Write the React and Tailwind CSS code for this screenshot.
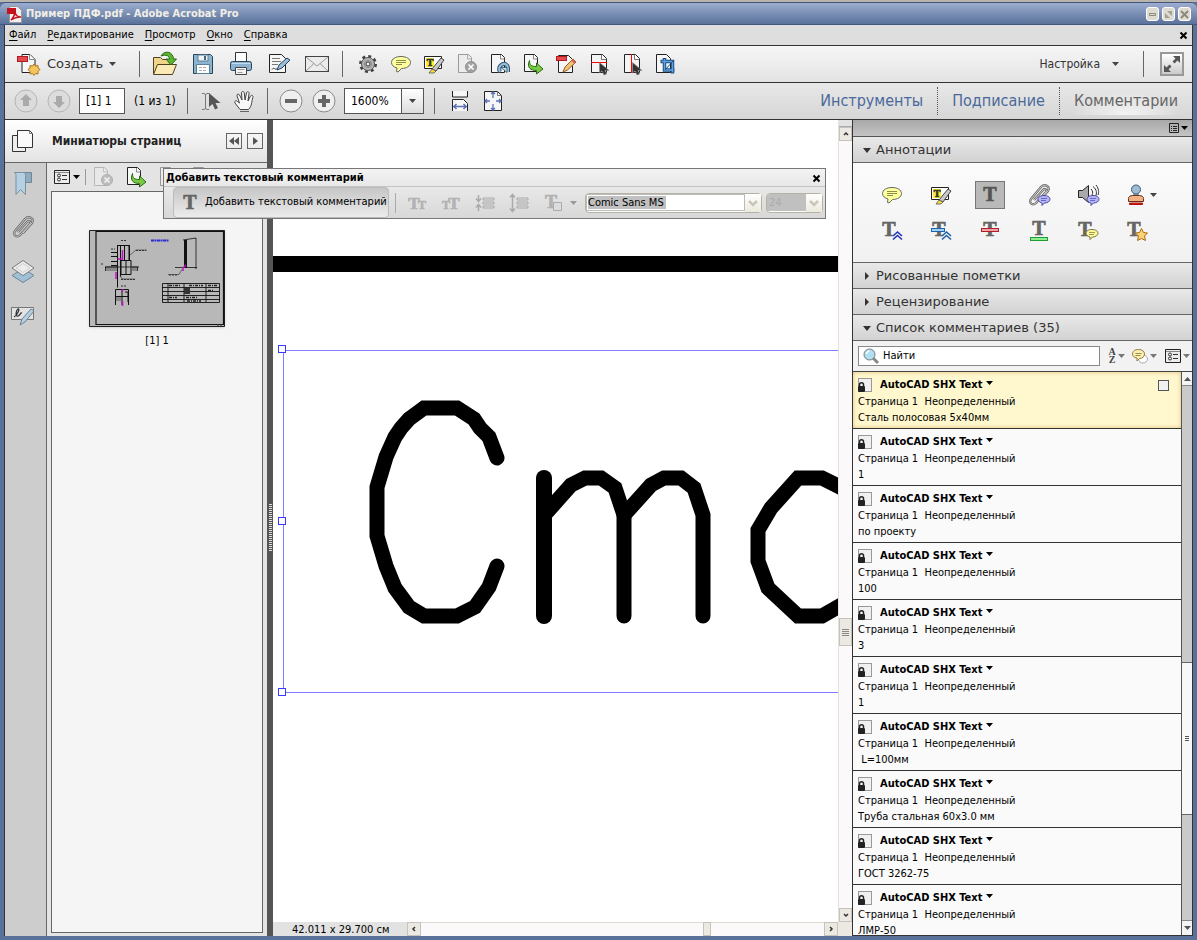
import { useState } from "react";

const COMMENTS = [
  "Сталь полосовая 5x40мм",
  "1",
  "по проекту",
  "100",
  "3",
  "1",
  "\u00a0L=100мм",
  "Труба стальная 60x3.0 мм",
  "ГОСТ 3262-75",
  "ЛМР-50",
];

const MENU = ["Файл", "Редактирование", "Просмотр", "Окно", "Справка"];

/* ── Icons ──────────────────────────────────── */

function Svg({ size = 24, children, className = "" }) {
  return (
    <svg
      width={size}
      height={size}
      viewBox={`0 0 ${size} ${size}`}
      fill="none"
      className={`shrink-0 overflow-visible ${className}`}
      aria-hidden="true"
    >
      {children}
    </svg>
  );
}

function Caret({ className = "text-[#444]" }) {
  return (
    <svg width="7" height="4" viewBox="0 0 7 4" className={`shrink-0 ${className}`} aria-hidden="true">
      <path d="M0 0h7L3.5 4z" fill="currentColor" />
    </svg>
  );
}

function PageShape({ stroke = "#222", fill = "#f4f4f4" }) {
  return (
    <g stroke={stroke}>
      <path d="M4.5 2.500h11l4 4v14h-15z" fill={fill} />
      <path d="M14.500 2.500v5h5" fill="#fff" strokeOpacity=".6" />
    </g>
  );
}

function BigT({ x = 12, y = 18, size = 20, fill = "#666" }) {
  return (
    <text
      x={x}
      y={y}
      fontSize={size}
      textAnchor="middle"
      fill={fill}
      stroke={fill}
      strokeWidth=".7"
      className="font-['Liberation_Serif',serif] font-bold"
    >
      T
    </text>
  );
}

function Pointer() {
  return <path d="M12.500 10.500v10.500l2.500-2 2 4 2.500-1-1.500-3.500h4z" fill="#333" stroke="#888" strokeWidth=".6" />;
}

function AcrobatIcon() {
  return (
    <Svg size={17}>
      <path d="M3.500.5h8l4 4v12h-12z" fill="#f4eeee" stroke="#999" />
      <path d="M1 2h9v6H1z" fill="#c4131c" />
      <path d="M5 14c3-3 4-6 4-9 0 4 2 6 6 6-4-.5-7 1-10 3z" stroke="#c4131c" strokeWidth="1.500" />
    </Svg>
  );
}

function CreateIcon() {
  return (
    <Svg size={24}>
      <path d="M5 2.500h8l5 5v13H5z" fill="#f7f7f7" stroke="#222" />
      <path d="M12.500 2.500v5h5" fill="#fff" stroke="#888" />
      <rect x=".5" y="4.500" width="10" height="5" fill="#e34a50" stroke="#b3191f" />
      <path
        d="M17 12l1.500 2 2.500-.5V16l2 1.500-2 2V22l-2.500-.5-1.500 2-1.500-2-2.500.5v-2.500l-2-2 2-1.500v-2.500l2.500.5z"
        fill="#f6c45c"
        stroke="#a8741a"
      />
    </Svg>
  );
}

function OpenIcon() {
  return (
    <Svg size={26}>
      <path d="M1.500 22.500v-16h7l2 2h9v14z" fill="#f0d48a" stroke="#4f4020" />
      <path d="M1.500 23.500l4-10h19l-4 10z" fill="#fbeab5" stroke="#4f4020" />
      <path d="M9 5c3-6 12-5 12.500 3h3L19 14l-5-6h3.500c0-3-3-5-8.500-3z" fill="#5cb531" stroke="#2b6b12" />
    </Svg>
  );
}

function SaveIcon() {
  return (
    <Svg size={24}>
      <path d="M2.500 2.500h17l2 2v17h-19z" fill="#8db4cf" stroke="#27455d" />
      <path d="M7 3h10v6H7z" fill="#eef3f6" stroke="#5a7f99" />
      <rect x="13" y="4" width="2" height="4" fill="#44647c" />
      <path d="M5.500 12.500h13v9h-13z" fill="#fff" stroke="#5a7f99" />
      <path d="M8 15.500h8M8 18.500h8" stroke="#aaa" strokeDasharray="3 1" />
    </Svg>
  );
}

function PrintIcon() {
  return (
    <Svg size={24}>
      <path d="M6.500.5h11v9h-11z" fill="#fff" stroke="#333" />
      <rect x="1.500" y="9.500" width="21" height="9" rx="2" fill="#8db3d0" stroke="#27455d" />
      <path d="M3 11.500h18" stroke="#c7dcea" />
      <path d="M6.500 15.500h11v7h-11z" fill="#f5f5f5" stroke="#444" />
      <path d="M8.500 17.500h7M8.500 20.500h5" stroke="#999" />
    </Svg>
  );
}

function SignIcon() {
  return (
    <Svg size={24}>
      <path d="M2.500 2.500h12l4 4v14h-16z" fill="#f6f6f6" stroke="#222" />
      <path d="M5 6.500h8M5 9.500h9M5 12.500h6" stroke="#777" />
      <path d="M5 17.500c2-3 3 1 5-1" stroke="#333" />
      <path d="M10 18l2-5 8-7 3 2-8 8z" fill="#9dbdd8" stroke="#26435e" />
    </Svg>
  );
}

function MailIcon() {
  return (
    <Svg size={26}>
      <rect x="1.500" y="5.500" width="23" height="15" fill="#ebebeb" stroke="#444" />
      <path d="M2 6l11 9 11-9M2 20l8-7.500M24 20l-8-7.500" stroke="#999" />
    </Svg>
  );
}

function GearIcon() {
  return (
    <Svg>
      <circle cx="12" cy="12" r="7.500" stroke="#444" strokeWidth="3" strokeDasharray="2.945 2.945" />
      <circle cx="12" cy="12" r="6.500" fill="#b4b4b4" stroke="#555" />
      <circle cx="12" cy="12" r="3.500" stroke="#888" />
      <circle cx="12" cy="12" r="2" fill="#eee" stroke="#444" />
    </Svg>
  );
}

function BubbleIcon() {
  return (
    <Svg>
      <path
        d="M12 4.500c5.500 0 9.500 2.500 9.500 6s-4 6-9 6l-3.500 3.500-1.500-.5.500-3.500c-3.500-1-5.500-3-5.500-5.500 0-3.500 4-6 9.500-6z"
        fill="#feff9d"
        stroke="#666"
      />
      <path d="M7 8.500h10M7 10.500h10M7 12.500h6" stroke="#8c8c4c" />
    </Svg>
  );
}

function HighlightIcon() {
  return (
    <Svg>
      <path d="M2.500 4.500h17v12h-17z" fill="#fff" stroke="#222" />
      <rect x="4" y="6" width="8" height="9" fill="#ffee2e" />
      <BigT x={8} y={14} size={10} fill="#333" />
      <path d="M10 17l9-11 3 2-8 11z" fill="#c9c9c9" stroke="#444" />
      <path d="M7 21l3-4 4 2-2 2z" fill="#f6dc3a" stroke="#555" strokeWidth=".8" />
    </Svg>
  );
}

function DeletePageIcon() {
  return (
    <Svg>
      <path d="M3.500 2.500h10l3 3v15h-13z" fill="#ececec" stroke="#9a9a9a" />
      <path d="M12.500 3v4h4" stroke="#aaa" />
      <circle cx="16" cy="15" r="5.500" fill="#a3a3a3" stroke="#8d8d8d" />
      <path d="M13.500 12.500l5 5m0-5l-5 5" stroke="#fff" strokeWidth="1.500" />
    </Svg>
  );
}

function RotatePageIcon() {
  return (
    <Svg>
      <path d="M3.500 2.500h10l3 3v15h-13z" fill="#f6f6f6" stroke="#222" />
      <path d="M12.500 3v4h4" stroke="#888" />
      <path d="M12 20c-4-7 7-12 8-4v4" stroke="#31516b" strokeWidth="4" />
      <path d="M12 20c-4-7 7-12 8-4v4" stroke="#9cc3de" strokeWidth="2" />
      <path d="M13 15.500h6v5z" fill="#b9d8eb" stroke="#31516b" strokeWidth=".8" />
    </Svg>
  );
}

function ExtractPageIcon() {
  return (
    <Svg>
      <path d="M3.500 2.500h10l3 3v14h-13z" fill="#f6f6f6" stroke="#222" />
      <path d="M12.500 3v4h4" stroke="#888" />
      <path d="M8.500 8.500c0 5 2 6 7 6V11l6.500 6-6.500 5v-3.500c-6 0-10-3-7-10z" fill="#78c943" stroke="#2c6a14" />
    </Svg>
  );
}

function EditPdfIcon() {
  return (
    <Svg>
      <path d="M4.500 3.500h10l4 4v13h-14z" fill="#f6f6f6" stroke="#222" />
      <rect x="2.500" y="4.500" width="10" height="4" fill="#e8474c" stroke="#b3191f" />
      <path d="M9 20l2-5 8-8 3 3-8.500 8z" fill="#f3c077" stroke="#96601d" />
      <path d="M18 8l3 3" stroke="#d45d5d" strokeWidth="2" />
    </Svg>
  );
}

function SplitIcon({ vertical }) {
  return (
    <Svg>
      <PageShape />
      {vertical ? <path d="M11.500 2v19" stroke="#f00" /> : <path d="M4 10.500h16" stroke="#f00" />}
      <Pointer />
    </Svg>
  );
}

function CropIcon() {
  return (
    <Svg>
      <path d="M3.500 2.500h10l4 4v14h-14z" fill="#f6f6f6" stroke="#222" />
      <path d="M11.500 6v12h10M7.500 9.500h12v12" stroke="#194e84" strokeWidth="3.500" />
      <path d="M11.500 7v11h9M8.500 9.500h11v11" stroke="#63a3dc" strokeWidth="1.500" />
      <path d="M12 18L21 8" stroke="#194e84" />
    </Svg>
  );
}

function ExpandIcon() {
  return (
    <Svg size={20}>
      <path d="M11 2h7v7l-2.500-2.500-3 3-2-2 3-3zM9 18H2v-7l2.500 2.500 3-3 2 2-3 3z" fill="#555" />
    </Svg>
  );
}

function RoundIcon({ children, dim }) {
  return (
    <Svg>
      <circle cx="12" cy="12" r="11" fill={dim ? "#dcdcdc" : "#efefef"} stroke={dim ? "#b5b5b5" : "#8a8a8a"} />
      {children}
    </Svg>
  );
}

function CursorIcon() {
  return (
    <Svg>
      <path d="M3 4.500h2l1.500 1 1.500-1h2M3 20.500h2l1.500-1 1.500 1h2M6.500 5v15" stroke="#777" />
      <path d="M10 4v14l3.500-3 2.500 5.500 3-1.500-2.500-5h5z" fill="#555" />
    </Svg>
  );
}

function HandIcon() {
  return (
    <Svg>
      <path
        d="M8 20.500L3 14c-1-2 1-3 2.500-1.500L7.500 14 5 7c-.5-2 1.800-2.500 2.500-1L10 11 9.500 4c0-2 2.500-2 2.800 0L13 11l1.500-7c.5-2 2.800-1.500 2.500.5L16 12l2.500-5c1-1.500 3-.5 2.300 1.500C19.500 13 20 17 16.500 20.500z"
        fill="#f7f7f7"
        stroke="#444"
      />
      <path d="M8 22.500h9" stroke="#666" />
    </Svg>
  );
}

function FitWidthIcon() {
  return (
    <Svg>
      <path d="M4.500 2v6h15V2M4.500 22V10.500h11l4 4V22" fill="#f6f6f6" stroke="#222" />
      <path d="M5 17.500h14M8.500 15l-2.500 2.500 2.500 2.500M15.500 15l2.500 2.500-2.500 2.500" stroke="#5a72b5" strokeWidth="1.500" />
    </Svg>
  );
}

function FitPageIcon() {
  return (
    <Svg>
      <path d="M3.500 2.500h13l4 4v15h-17z" fill="#f6f6f6" stroke="#222" />
      <path d="M16.500 2.500v4h4" stroke="#777" />
      <path d="M12 3v6M12 15v6M4 12h5M15 12h5M10 5l2-2 2 2M10 19l2 2 2-2M6 10l-2 2 2 2M18 10l2 2-2 2" stroke="#5a72b5" strokeWidth="1.300" />
    </Svg>
  );
}

function PagesIcon() {
  return (
    <Svg>
      <path d="M1.500 6.500h13v16h-13z" fill="#eee" stroke="#333" />
      <path d="M6.500 1.500h12l3 3v14h-15z" fill="#fafafa" stroke="#333" />
      <path d="M18.500 1.500v3h3" stroke="#777" />
    </Svg>
  );
}

function BookmarkIcon() {
  return (
    <Svg>
      <path d="M3.500 1.500h17v10h-6v-7z" fill="#8fabc0" stroke="#6f8798" />
      <path d="M3.500 1.500h9c2 0 2 2 2 3v19l-5-5-4.500 5V4c0-1-.5-2-1.500-2.500z" fill="#b5d0e2" stroke="#7790a2" />
    </Svg>
  );
}

function ClipIcon({ bubble }) {
  return (
    <Svg>
      <path d="M7 17L16 7c2-2 4.500 0 3 2L9 20c-3 3-8 0-5-4L14 4c4-4 10 0 7 4l-9 10" stroke="#6a6a6a" strokeWidth="2.400" />
      <path d="M7 17L16 7c2-2 4.500 0 3 2L9 20c-3 3-8 0-5-4L14 4c4-4 10 0 7 4l-9 10" stroke="#d5d5d5" strokeWidth=".9" />
      {bubble && <SmallBubble fill="#b5b5ff" stroke="#4a4a9a" />}
    </Svg>
  );
}

function SmallBubble({ fill, stroke }) {
  return (
    <g>
      <path d="M17 12.500c3.500 0 6 1.500 6 3.700s-2.500 3.800-5.500 3.800L15 22.500V20c-2-.5-4-2-4-3.800 0-2.200 2.500-3.700 6-3.700z" fill={fill} stroke={stroke} />
      <path d="M14 15.500h6M14 17.500h5" stroke={stroke} strokeOpacity=".7" />
    </g>
  );
}

function LayersIcon() {
  return (
    <Svg>
      <path d="M12 9.500l11 7-11 7-11-7z" fill="#9fc0d6" stroke="#6f8798" />
      <path d="M12 1.500l11 7.500-11 7.500L1 9z" fill="#ededed" stroke="#7b7b7b" />
      <path d="M12 4.500l7 4.500-7 4.500L5 9z" stroke="#cfcfcf" />
    </Svg>
  );
}

function SignaturesIcon() {
  return (
    <Svg>
      <path d="M.5 4.500h22v12H.5z" fill="#e3e3e3" stroke="#777" />
      <path d="M3 14c4-2 6-9 4-8s-3 8 0 7 2-4 4-3" stroke="#333" strokeWidth="1.300" />
      <path d="M9 22l2-6 9-10 3 2-9 11z" fill="#b5cfe0" stroke="#6c8496" />
    </Svg>
  );
}

function OptionsIcon() {
  return (
    <Svg size={16}>
      <path d="M.5 1.500h15v13H.5z" fill="#ececec" stroke="#222" />
      <path d="M1 3.500h14" stroke="#888" />
      <circle cx="5" cy="6.500" r="1.500" stroke="#333" />
      <circle cx="5" cy="10.500" r="1.500" stroke="#333" />
      <path d="M8 6.500h5M8 10.500h5" stroke="#333" />
    </Svg>
  );
}

function SoundIcon() {
  return (
    <Svg>
      <path d="M2.500 7.500h4l6-5v17l-6-5h-4z" fill="#a9a9a9" stroke="#222" />
      <path d="M15 6c2 2 2 4 1 6M17 3.500c4 3 4 7 2.500 10M20 2c3 4 3 7 2 10" stroke="#333" />
      <SmallBubble fill="#b5b5ff" stroke="#4a4a9a" />
    </Svg>
  );
}

function StampIcon() {
  return (
    <Svg>
      <path d="M9 11l1-4h4l1 4v3H9z" fill="#8aa9bf" />
      <circle cx="12" cy="6.500" r="4.500" fill="#9dbed2" stroke="#3f5a6c" />
      <path d="M4.500 18.500v-3c0-2 2-3 4-3h7c2 0 4 1 4 3v3z" fill="#f4b183" stroke="#5d3217" />
      <path d="M5.500 20h13v1.500h-13z" fill="#f22" stroke="#a11" />
    </Svg>
  );
}

function Chevrons({ stroke }) {
  return (
    <g transform="translate(0 -1)">
      <path d="M13 18l4.500-4 4.500 4M13 21.500l4.500-4 4.500 4" stroke={stroke} strokeWidth="1.600" />
    </g>
  );
}

function TextMarkIcon({ kind }) {
  return (
    <Svg>
      {kind === "insert" && (
        <>
          <BigT x={9} y={17} />
          <Chevrons stroke="#2433b8" />
        </>
      )}
      {kind === "replace" && (
        <>
          <BigT x={10} y={17} />
          <rect x="2.500" y="9.500" width="13" height="3" fill="#9fd0f5" stroke="#1f64a8" />
          <Chevrons stroke="#1f64a8" />
        </>
      )}
      {kind === "strike" && (
        <>
          <BigT y={17} />
          <rect x="3.500" y="9.500" width="17" height="3" fill="#f3a0a5" stroke="#b01e2a" />
        </>
      )}
      {kind === "underline" && (
        <>
          <BigT y={16} />
          <rect x="3.500" y="18.500" width="17" height="3" fill="#8fee8f" stroke="#1d9c33" />
        </>
      )}
      {kind === "note" && (
        <>
          <BigT x={9} y={17} />
          <g transform="translate(-1 -2)">
            <SmallBubble fill="#fdf89a" stroke="#77733a" />
          </g>
        </>
      )}
      {kind === "star" && (
        <>
          <BigT x={9} y={17} />
          <path d="M16.500 9.500l2 4 4 .5-3 3 1 4.500-4-2-4 2 1-4.500-3-3 4-.5z" fill="#fbd270" stroke="#a8691b" />
        </>
      )}
    </Svg>
  );
}

function LockIcon() {
  return (
    <Svg size={14}>
      <rect x=".5" y=".5" width="13" height="13" fill="#f0f0f0" stroke="#999" />
      <rect y="8" width="7" height="6" rx="1" fill="#222" />
      <path d="M1.500 8V6.500c0-2.500 4-2.500 4 0V8" stroke="#222" strokeWidth="1.500" />
    </Svg>
  );
}

function Thumbnail() {
  return (
    <svg width="136" height="97" viewBox="0 0 136 97" fill="none" className="bg-[#b8b8b8] shadow-sm" aria-hidden="true">
      <path d="M.5.500h135v96H.5z" stroke="#222" />
      <path d="M7 1.500h127.500v93H7z" stroke="#111" strokeWidth="1.200" />
      <g stroke="#111">
        <path d="M28 15.500h12v15M28.500 15.500v42M31.500 15.500v31M35.500 15.500v15M32 30.500h10v14H32zM37 31v13M40.500 15v15" />
        <path d="M16.500 41v-4h32v4M16 37h12M43 37h7" strokeWidth=".8" />
        <path d="M22 22.500h6M22 26.500h6M22 31.500h6M22 35.500h6" />
        <path d="M41 25l6-5h11" strokeWidth=".5" />
        <path d="M31 45l2 4h13" strokeWidth=".5" />
        <path d="M26.500 75V59.500h13V75M26 66.500h13M33 60v15M36 62h3v10" />
        <path d="M96.500 10v28" strokeWidth="3" />
        <path d="M94 10l13-2v31M86 37.500h22" strokeWidth=".8" />
        <path d="M79 44.500h11l3-5" strokeWidth=".5" />
        <path d="M73.500 53.500h57v19h-57zM73.500 57.500h57M73.500 61.500h57M73.500 65.500h57M73.500 69.500h57M79 53v19M95 53v19M117 53v19" strokeWidth=".9" />
      </g>
      <path d="M17 38h11v3H17zM43 38h5v3h-5zM27 67h5v4h-5z" fill="#888" />
      <path d="M80 55.500h12M100 55.500h14M119 55.500h9M80 67.500h8M97 67.500h12M119 60.500h6M98 71h14" stroke="#222" strokeWidth="1.500" strokeDasharray="3 1 1 1" />
      <path d="M95 58h6v6h-6z" fill="#333" />
      <path d="M32 10.500h5M32 56h5M47 20.500h10M32 49.500h14M80 45h8M22 19h4M12 34h2M128 95h6" stroke="#333" strokeDasharray="2 1" />
      <path d="M62 10.500h18" stroke="#2a2ad8" strokeWidth="2" strokeDasharray="3 .5 2 .5" />
      <path d="M33.500 20v9h-5M27 42v7M33.500 59v3M33.500 71v5M97 35l-3 3v3" stroke="#c010c0" strokeWidth="1.500" />
    </svg>
  );
}

/* ── Bits shared by the bars ─────────────────── */

function IconButton({ label, children, className = "w-[33px]" }) {
  return (
    <button type="button" aria-label={label} className={`flex h-6 shrink-0 items-center justify-center ${className}`}>
      {children}
    </button>
  );
}

function Separator({ className = "" }) {
  return <span className={`h-[26px] w-px shrink-0 bg-[#666] ${className}`} />;
}

function ScrollButton({ label, d, className = "h-[14px] w-full" }) {
  return (
    <button
      type="button"
      aria-label={label}
      className={`flex shrink-0 items-center justify-center border border-[#c5c3bb] bg-[#ece9e2] ${className}`}
    >
      <svg width="6" height="6" viewBox="0 0 6 6" fill="none" aria-hidden="true">
        <path d={d} stroke="#333" strokeWidth="1.500" />
      </svg>
    </button>
  );
}

function TitleBar() {
  const box = "flex h-[14px] w-[13px] items-center justify-center rounded-[3px] border border-white bg-[#dedcd2]";
  return (
    <header className="flex h-[23px] shrink-0 items-center rounded-t-md border-y border-[#42567b] bg-gradient-to-b from-[#9dadd0] to-[#59729a] pt-px pr-1.5 pl-1.5">
      <AcrobatIcon />
      <h1 className="ml-[3px] flex-1 text-[11px] font-bold text-[#f1efe6]">Пример ПДФ.pdf - Adobe Acrobat Pro</h1>
      <div className="flex gap-[3px]">
        <button type="button" aria-label="Свернуть" className={box}>
          <Svg size={9}>
            <path d="M1.500 3.500h6v2h-6z" stroke="#8c887a" />
          </Svg>
        </button>
        <button type="button" aria-label="Развернуть" className={box}>
          <Svg size={9}>
            <path d="M3 1h5v5zM1 3v5h5z" fill="#a5a192" />
          </Svg>
        </button>
        <button type="button" aria-label="Закрыть" className={box}>
          <Svg size={9}>
            <path d="M1 1l7 7M8 1L1 8" stroke="#8c887a" strokeWidth="2" />
          </Svg>
        </button>
      </div>
    </header>
  );
}

function MenuBar() {
  return (
    <nav className="flex h-[21px] shrink-0 items-center gap-[11px] border-b border-[#333] bg-[#dedede] pr-[5px] pl-1">
      {MENU.map((item) => (
        <button key={item} type="button" className="text-[11px]">
          <span className="underline underline-offset-2">{item[0]}</span>
          {item.slice(1)}
        </button>
      ))}
      <button type="button" aria-label="Закрыть документ" className="ml-auto">
        <Svg size={7}>
          <path d="M.5.500l6 6M6.500.500l-6 6" stroke="#000" strokeWidth="2" />
        </Svg>
      </button>
    </nav>
  );
}

function MainToolbar() {
  const wide = "w-[38px]";
  return (
    <div className="flex h-[37px] shrink-0 items-center border-b border-[#333] bg-gradient-to-b from-[#f6f6f6] to-[#e3e3e3] pr-2 pl-3">
      <button type="button" className="flex w-[102px] items-center font-['DejaVu_Sans',sans-serif] text-[13px] text-[#333]">
        <CreateIcon />
        <span className="ml-1.5">Создать</span>
        <Caret className="ml-1.5 text-[#444]" />
      </button>
      <Separator className="ml-5" />
      <div className="mr-1.5 ml-1.5 flex items-center">
        <IconButton label="Открыть" className={wide}><OpenIcon /></IconButton>
        <IconButton label="Сохранить" className={wide}><SaveIcon /></IconButton>
        <IconButton label="Печать" className={wide}><PrintIcon /></IconButton>
        <IconButton label="Подписать" className={wide}><SignIcon /></IconButton>
        <IconButton label="Отправить" className={wide}><MailIcon /></IconButton>
      </div>
      <Separator />
      <div className="ml-2 flex items-center">
        <IconButton label="Параметры"><GearIcon /></IconButton>
        <IconButton label="Заметка"><BubbleIcon /></IconButton>
        <IconButton label="Выделить текст"><HighlightIcon /></IconButton>
        <IconButton label="Удалить страницу"><DeletePageIcon /></IconButton>
        <IconButton label="Повернуть"><RotatePageIcon /></IconButton>
        <IconButton label="Извлечь"><ExtractPageIcon /></IconButton>
        <IconButton label="Редактировать PDF"><EditPdfIcon /></IconButton>
        <IconButton label="Разделить по горизонтали"><SplitIcon /></IconButton>
        <IconButton label="Разделить по вертикали"><SplitIcon vertical /></IconButton>
        <IconButton label="Обрезать"><CropIcon /></IconButton>
      </div>
      <button type="button" className="mr-6 ml-auto flex items-center gap-3 text-xs text-[#333]">
        Настройка
        <Caret />
      </button>
      <Separator />
      <button
        type="button"
        aria-label="Режим чтения"
        className="ml-4 flex h-6 w-6 items-center justify-center border-2 border-[#999] bg-gradient-to-b from-white to-[#ccc]"
      >
        <ExpandIcon />
      </button>
    </div>
  );
}

function NavToolbar() {
  const [page, setPage] = useState("[1] 1");
  const tab = "px-3.5 text-base leading-7";
  return (
    <div className="flex h-[37px] shrink-0 items-center border-b border-[#333] bg-gradient-to-b from-[#e8e8e8] to-[#d6d6d6] pl-1">
      <IconButton label="Предыдущая страница">
        <RoundIcon dim><path d="M12 5l6 6h-3v6H9v-6H6z" fill="#aaa" /></RoundIcon>
      </IconButton>
      <IconButton label="Следующая страница">
        <RoundIcon dim><path d="M12 19l6-6h-3V7H9v6H6z" fill="#aaa" /></RoundIcon>
      </IconButton>
      <input
        aria-label="Номер страницы"
        value={page}
        onChange={(e) => setPage(e.target.value)}
        className="ml-1 h-[26px] w-[46px] border border-[#555] bg-white px-1.5 text-xs"
      />
      <span className="ml-[9px] w-[53px] text-xs">(1 из 1)</span>
      <Separator />
      <div className="ml-1.5 flex items-center pr-[7px]">
        <IconButton label="Выделение"><CursorIcon /></IconButton>
        <IconButton label="Рука"><HandIcon /></IconButton>
      </div>
      <Separator />
      <div className="ml-1.5 flex items-center">
        <IconButton label="Уменьшить">
          <RoundIcon><path d="M6 10h12v4H6z" fill="#666" /></RoundIcon>
        </IconButton>
        <IconButton label="Увеличить">
          <RoundIcon><path d="M10 6h4v4h4v4h-4v4h-4v-4H6v-4h4z" fill="#666" /></RoundIcon>
        </IconButton>
      </div>
      <div className="ml-1 flex h-[26px] w-20 items-center border border-[#555] bg-white">
        <select aria-label="Масштаб" className="h-full min-w-0 flex-1 appearance-none pl-1.5 text-xs">
          <option>1600%</option>
          <option>100%</option>
        </select>
        <span className="flex h-full w-[22px] items-center justify-center border-l border-[#555] bg-gradient-to-b from-white to-[#ddd]">
          <Caret />
        </span>
      </div>
      <Separator className="ml-2.5" />
      <div className="ml-2 flex items-center">
        <IconButton label="По ширине"><FitWidthIcon /></IconButton>
        <IconButton label="Страница целиком"><FitPageIcon /></IconButton>
      </div>
      <div className="ml-auto flex items-center">
        <button type="button" className={`${tab} border-r border-dotted border-[#555] text-[#49699a]`}>Инструменты</button>
        <button type="button" className={`${tab} border-r border-dotted border-[#555] text-[#49699a]`}>Подписание</button>
        <button type="button" className={`${tab} bg-[radial-gradient(ellipse_at_bottom,#f4f4f4,transparent_60%)] text-[#666]`}>
          Комментарии
        </button>
      </div>
    </div>
  );
}

/* ── Left side ──────────────────────────────── */

function PagesPanel() {
  return (
    <aside className="flex w-[263px] shrink-0 flex-col border-r border-[#555]">
      <div className="flex h-[43px] shrink-0 items-center border-b border-[#666] bg-gradient-to-b from-white to-[#e3e3e3] pr-1 pl-1.5">
        <PagesIcon />
        <h2 className="ml-[17px] flex-1 text-xs font-bold text-[#222]">Миниатюры страниц</h2>
        <div className="flex gap-[5px]">
          <button type="button" aria-label="Свернуть панель" className="flex h-4 w-4 items-center justify-center border border-[#666]">
            <Svg size={10}><path d="M5 1v8L0 5zM10 1v8L5 5z" fill="#555" /></Svg>
          </button>
          <button type="button" aria-label="Развернуть панель" className="flex h-4 w-4 items-center justify-center border border-[#666]">
            <Svg size={10}><path d="M3 1v8l5-4z" fill="#555" /></Svg>
          </button>
        </div>
      </div>
      <div className="flex min-h-0 flex-1">
        <nav className="flex w-[42px] shrink-0 flex-col items-center gap-5 border-r border-[#666] bg-[#cdcdcd] pt-2 pr-[5px]">
          <IconButton label="Закладки"><BookmarkIcon /></IconButton>
          <IconButton label="Вложения"><ClipIcon /></IconButton>
          <IconButton label="Слои"><LayersIcon /></IconButton>
          <IconButton label="Подписи"><SignaturesIcon /></IconButton>
        </nav>
        <div className="flex min-w-0 flex-1 flex-col bg-[#e4e4e4] px-1 pb-[3px]">
          <div className="flex h-7 shrink-0 items-center pl-[3px]">
            <button type="button" aria-label="Параметры" className="flex items-center gap-[3px]">
              <OptionsIcon />
              <Caret className="text-black" />
            </button>
            <span className="ml-[5px] h-4 w-px bg-[#999]" />
            <span className="flex">
              <IconButton label="Удалить"><span className="opacity-60"><DeletePageIcon /></span></IconButton>
              <IconButton label="Извлечь"><ExtractPageIcon /></IconButton>
              <span className="flex opacity-40">
                <IconButton label="Повернуть влево"><RotatePageIcon /></IconButton>
                <IconButton label="Повернуть вправо"><RotatePageIcon /></IconButton>
              </span>
            </span>
          </div>
          <div className="flex flex-1 flex-col items-center border border-[#666] bg-[#f5f5f5] pt-[38px]">
            <Thumbnail />
            <p className="mt-1.5 text-[11px] leading-4">[1] 1</p>
          </div>
        </div>
      </div>
    </aside>
  );
}

function Splitter() {
  return (
    <div className="flex w-[5px] shrink-0 flex-col items-center justify-center bg-[#555]">
      <span className="h-12 w-[3px] bg-[repeating-linear-gradient(#ddd_0_1px,#555_1px_2px)]" />
    </div>
  );
}

/* ── Page canvas ────────────────────────────── */

function Drawing() {
  return (
    <svg width="100%" height="100%" fill="none" className="block" role="img" aria-label="Чертеж">
      <rect y="136" width="100%" height="16" fill="#000" />
      <g transform="translate(-273 -120)">
        <g stroke="#000" strokeWidth="15" strokeLinecap="round" strokeLinejoin="miter">
          <polyline points="497,458 489,437 480,428 474,419 457,408 424,408 409,419 401,428 395,437 386,457 377,487 377,536 386,566 395,588 409,607 424,616 457,616 475,607 489,587 497,566" />
          <polyline points="544,478 544,616" strokeWidth="16" />
          <polyline points="547,512 571,485 585,478 601,478 615,488 624,515 624,616" />
          <polyline points="624,515 651,485 664,478 681,478 694,488 703,515 703,616" />
          <polyline points="850,492 822,478 798,478 771,508 758,530 758,561 768,588 798,616 822,616 850,600" />
        </g>
        <path d="M1400 350.500H283.500v342H1400" stroke="#7f7fff" />
        <g fill="#fff" stroke="#3a3aff">
          <rect x="278.500" y="345.500" width="7" height="7" />
          <rect x="278.500" y="517.500" width="7" height="7" />
          <rect x="278.500" y="688.500" width="7" height="7" />
        </g>
      </g>
    </svg>
  );
}

function DocumentView() {
  return (
    <main className="flex min-w-0 flex-1 flex-col bg-white">
      <div className="flex min-h-0 flex-1">
        <div className="min-w-0 flex-1 overflow-hidden">
          <Drawing />
        </div>
        <div className="flex w-[14px] shrink-0 flex-col border-l border-[#e4e2dc] bg-[#fbf9fa]">
          <span className="h-[7px] shrink-0 border-b border-[#aaa] bg-[#e2e2e2]" />
          <ScrollButton label="Вверх" d="M1 4l2-2 2 2" />
          <span className="flex-[477]" />
          <span className="flex h-7 w-full flex-col items-center justify-center gap-px border border-[#c5c3bb] bg-[#ece9e2]">
            <span className="h-px w-[7px] bg-[#888]" />
            <span className="h-px w-[7px] bg-[#888]" />
            <span className="h-px w-[7px] bg-[#888]" />
            <span className="h-px w-[7px] bg-[#888]" />
          </span>
          <span className="flex-[262]" />
          <ScrollButton label="Вниз" d="M1 2l2 2 2-2" />
        </div>
      </div>
      <div className="flex h-[14px] shrink-0 bg-[#fbf9fa]">
        <span className="w-[134px] shrink-0 bg-[#e2e2e2] pl-[19px] text-[11px] leading-4">42.011 x 29.700 см</span>
        <ScrollButton label="Влево" d="M4 1L2 3l2 2" className="w-[14px]" />
        <span className="flex-[282] border-t border-[#dedbd3]" />
        <span className="w-2 border border-[#c5c3bb] bg-[#ece9e2]" />
        <span className="flex-[113] border-t border-[#dedbd3]" />
        <ScrollButton label="Вправо" d="M2 1l2 2-2 2" className="w-[14px]" />
        <span className="w-[14px] shrink-0 bg-[#ece9e2]" />
      </div>
    </main>
  );
}

function TextToolbar() {
  return (
    <section className="absolute top-12 left-[158px] flex h-[51px] w-[663px] flex-col border border-[#777] bg-gradient-to-b from-[#f2f2f2] to-[#d8d8d8]">
      <div className="flex h-[18px] shrink-0 items-center justify-between border-b border-[#c4c4c4] pt-px pr-[5px] pl-0.5">
        <h2 className="text-[11px] font-bold">Добавить текстовый комментарий</h2>
        <button type="button" aria-label="Закрыть">
          <Svg size={7}><path d="M.5.500l6 6M6.500.500l-6 6" stroke="#000" strokeWidth="2" /></Svg>
        </button>
      </div>
      <div className="flex min-h-0 flex-1 items-center pl-[9px]">
        <button type="button" className="flex h-full w-[216px] items-center rounded-sm border border-[#bbb] bg-gradient-to-b from-[#c6c6c6] to-[#ececec] text-[11px]">
          <span className="ml-1 flex"><Svg><BigT y={18} /></Svg></span>
          <span className="ml-[3px] whitespace-nowrap">Добавить текстовый комментарий</span>
        </button>
        <span className="ml-1.5 h-5 w-px bg-[#aaa]" />
        <div className="ml-1 flex">
          <IconButton label="Меньше" className="w-[34px]">
            <Svg><BigT x={9} y={18} size={17} fill="#b2b2b2" /><BigT x={17} y={18} size={12} fill="#b2b2b2" /></Svg>
          </IconButton>
          <IconButton label="Больше" className="w-[34px]">
            <Svg><BigT x={7} y={18} size={12} fill="#b2b2b2" /><BigT x={15} y={18} size={17} fill="#b2b2b2" /></Svg>
          </IconButton>
          <IconButton label="Меньший интервал" className="w-[34px]">
            <Svg>
              <path d="M10 7h11v2H10zM10 11h11v2H10zM10 15h11v2H10z" stroke="#aaa" />
              <path d="M5.500 4v6M3 7.500l2.500 3L8 7.500M5.500 20v-6M3 16.500l2.500-3 2.500 3" stroke="#aaa" strokeWidth="1.500" />
            </Svg>
          </IconButton>
          <IconButton label="Больший интервал" className="w-[34px]">
            <Svg>
              <path d="M10 7h11v2H10zM10 11h11v2H10zM10 15h11v2H10z" stroke="#aaa" />
              <path d="M5.500 4v16M3 6.500l2.500-3L8 6.500M3 17.500l2.500 3 2.500-3" stroke="#aaa" strokeWidth="1.500" />
            </Svg>
          </IconButton>
        </div>
        <button type="button" aria-label="Цвет текста" className="ml-1.5 flex items-center gap-1">
          <Svg>
            <BigT x={9} y={17} size={18} fill="#b2b2b2" />
            <path d="M11.500 11.500h8v8h-8z" fill="#ddd" stroke="#aaa" />
          </Svg>
          <Caret className="text-[#999]" />
        </button>
        <div className="mr-1 ml-auto flex h-5 w-[177px] items-center rounded-sm border border-[#b5b2a4] bg-white">
          <div className="flex h-[17px] flex-1 items-center border border-[#bbb] pl-px">
            <select aria-label="Шрифт" className="h-[13px] w-[78px] appearance-none bg-[#c0c0c0] text-[11px] leading-[13px]">
              <option>Comic Sans MS</option>
            </select>
          </div>
          <ChevronBox />
        </div>
        <div className="mr-0.5 flex h-5 w-[57px] items-center rounded-sm border border-[#b5b2a4] bg-white">
          <select
            aria-label="Размер шрифта"
            disabled
            className="h-[17px] min-w-0 flex-1 appearance-none bg-[#c0c0c0] pl-0.5 text-[11px] leading-[17px] text-[#aaa] opacity-100"
          >
            <option>24</option>
          </select>
          <ChevronBox />
        </div>
      </div>
    </section>
  );
}

function ChevronBox() {
  return (
    <span className="flex h-full w-4 items-center justify-center bg-gradient-to-b from-white to-[#eceadd]">
      <Svg size={10}><path d="M1 3l4 4 4-4" stroke="#c9c7ba" strokeWidth="2.500" /></Svg>
    </span>
  );
}

/* ── Comments side ──────────────────────────── */

function SectionHeader({ open, children }) {
  return (
    <h2 className="shrink-0 border-b border-[#666] bg-gradient-to-b from-[#e9e9e9] to-[#d2d2d2]">
      <button
        type="button"
        aria-expanded={open}
        className="flex h-[25px] w-full items-center gap-[5px] pl-2.5 font-['DejaVu_Sans',sans-serif] text-[13px] text-[#333]"
      >
        <Svg size={8}>
          {open ? <path d="M0 2h8L4 7z" fill="#333" /> : <path d="M2 0v8l4-4z" fill="#333" />}
        </Svg>
        {children}
      </button>
    </h2>
  );
}

function CommentItem({ text, selected }) {
  return (
    <li
      className={`flex h-[57px] shrink-0 flex-col border-b border-[#333] pt-1 pr-3 pl-[5px] text-[11px] leading-4 ${
        selected ? "bg-[#fff7ce] shadow-[inset_0_0_4px_#d9bd7a]" : "bg-[#fafafa]"
      }`}
    >
      <div className="flex h-[18px] items-center">
        <LockIcon />
        <button type="button" className="ml-2 flex items-center gap-1 font-bold">
          AutoCAD SHX Text
          <Caret className="mb-1 text-black" />
        </button>
        {selected && (
          <input
            type="checkbox"
            aria-label="Отметить комментарий"
            className="ml-auto h-[11px] w-[11px] appearance-none border border-[#555] bg-[#f2f2f2]"
          />
        )}
      </div>
      <p className="whitespace-pre">{"Страница 1  Неопределенный"}</p>
      <p>{text}</p>
    </li>
  );
}

function CommentsPanel() {
  const [query, setQuery] = useState("");
  return (
    <aside className="flex w-[340px] shrink-0 flex-col border-l border-[#333] bg-[#f2f2f2]">
      <div className="flex h-[17px] shrink-0 items-center justify-end border-b border-[#555] bg-gradient-to-b from-[#a8a8a8] to-[#c4c4c4] pr-1">
        <button type="button" aria-label="Параметры панели" className="flex items-center gap-0.5">
          <Svg size={10}>
            <path d="M.5.500h9v9h-9zM2 3.500h1M4 3.500h4M2 5.500h1M4 5.500h4M2 7.500h1M4 7.500h4" stroke="#222" />
          </Svg>
          <Caret className="text-black" />
        </button>
      </div>
      <SectionHeader open>Аннотации</SectionHeader>
      <div className="h-[100px] shrink-0 border-b border-[#666] bg-gradient-to-b from-[#fbfbfb] to-[#f1f1f1] pt-[18px] pl-[14px]">
        <div className="grid w-[294px] grid-cols-6 items-center justify-items-center gap-y-2.5">
          <IconButton label="Заметка"><BubbleIcon /></IconButton>
          <IconButton label="Выделить"><HighlightIcon /></IconButton>
          <button type="button" aria-label="Текстовый комментарий" className="flex h-7 w-[30px] items-center justify-center border border-[#777] bg-[#b9b9b9]">
            <Svg><BigT y={18} fill="#555" /></Svg>
          </button>
          <IconButton label="Вложить файл"><ClipIcon bubble /></IconButton>
          <IconButton label="Запись звука"><SoundIcon /></IconButton>
          <button type="button" aria-label="Штамп" className="flex items-center gap-0.5 pl-2">
            <StampIcon />
            <Caret />
          </button>
          <IconButton label="Вставить текст"><TextMarkIcon kind="insert" /></IconButton>
          <IconButton label="Заменить текст"><TextMarkIcon kind="replace" /></IconButton>
          <IconButton label="Зачеркнуть"><TextMarkIcon kind="strike" /></IconButton>
          <IconButton label="Подчеркнуть"><TextMarkIcon kind="underline" /></IconButton>
          <IconButton label="Заметка к тексту"><TextMarkIcon kind="note" /></IconButton>
          <IconButton label="Исправления"><TextMarkIcon kind="star" /></IconButton>
        </div>
      </div>
      <SectionHeader>Рисованные пометки</SectionHeader>
      <SectionHeader>Рецензирование</SectionHeader>
      <SectionHeader open>Список комментариев (35)</SectionHeader>
      <div className="flex h-[31px] shrink-0 items-center border-b border-[#444] pl-[5px]">
        <label className="flex h-5 flex-1 items-center border border-[#888] bg-white pl-1">
          <Svg size={16}>
            <path d="M10 10l5 5" stroke="#888" strokeWidth="3" />
            <circle cx="6.500" cy="6.500" r="5.500" fill="#aee0f2" stroke="#777" />
            <path d="M3.500 6c0-2 2-3 3-3" stroke="#fff" strokeWidth="1.500" />
          </Svg>
          <input
            value={query}
            onChange={(e) => setQuery(e.target.value)}
            placeholder="Найти"
            aria-label="Найти"
            className="ml-1 min-w-0 flex-1 bg-transparent text-[11px] outline-none placeholder:text-black"
          />
        </label>
        <button type="button" aria-label="Сортировка" className="ml-2 flex items-center gap-0.5">
          <span className="flex w-2 flex-col items-center font-['Liberation_Serif',serif] text-[10px] leading-[8px] font-bold text-[#444]">
            <span>A</span>
            <span>Z</span>
          </span>
          <Caret className="text-[#777]" />
        </button>
        <button type="button" aria-label="Фильтр" className="ml-1.5 flex items-center gap-0.5">
          <Svg size={17}>
            <ellipse cx="12" cy="11" rx="4.500" ry="4" fill="#fff" stroke="#aaa" />
            <path d="M7.500 1.500c4 0 6 2 6 4.500s-2 4.500-5 4.500L6 13v-3C3 9.500 1.500 8 1.500 6c0-2.500 2-4.500 6-4.500z" fill="#fdeea8" stroke="#8f7d4a" />
            <path d="M4.500 5.500h6M4.500 7.500h5" stroke="#9b8d5d" />
          </Svg>
          <Caret className="text-[#777]" />
        </button>
        <button type="button" aria-label="Параметры" className="mr-0.5 ml-2 flex items-center gap-0.5">
          <OptionsIcon />
          <Caret className="text-[#777]" />
        </button>
      </div>
      <div className="flex min-h-0 flex-1 border-b border-[#333]">
        <ul className="flex min-w-0 flex-1 flex-col overflow-hidden">
          {COMMENTS.map((text, i) => (
            <CommentItem key={i} text={text} selected={i === 0} />
          ))}
        </ul>
        <div className="flex w-[11px] shrink-0 flex-col border-l border-[#555] bg-[#cacaca]">
          <button type="button" aria-label="Прокрутить вверх" className="flex h-[14px] items-center justify-center border-b border-[#888] bg-[#f4f4f4]">
            <Caret className="rotate-180 text-[#555]" />
          </button>
          <span className="flex-[275]" />
          <span className="flex h-[153px] flex-col items-center justify-center gap-px border-y border-[#666] bg-[#f8f8f8]">
            <span className="h-px w-1 bg-[#555]" />
            <span className="h-px w-1 bg-[#555]" />
            <span className="h-px w-1 bg-[#555]" />
          </span>
          <span className="flex-[105]" />
          <button type="button" aria-label="Прокрутить вниз" className="flex h-[15px] items-center justify-center border-t border-[#888] bg-[#f4f4f4]">
            <Caret className="text-[#555]" />
          </button>
        </div>
      </div>
    </aside>
  );
}

export default function App() {
  return (
    <div className="flex h-screen flex-col overflow-hidden border-t-2 border-[#b9b5ac] bg-[#5a7299] font-['DejaVu_Sans_Condensed','Open_Sans',sans-serif] whitespace-nowrap text-black">
      <TitleBar />
      <div className="flex min-h-0 flex-1 flex-col border-x-4 border-b-4 border-[#5a7299] bg-[#dedede]">
        <div className="flex min-h-0 flex-1 flex-col border-x border-[#333]">
          <MenuBar />
          <MainToolbar />
          <NavToolbar />
          <div className="relative flex min-h-0 flex-1">
            <PagesPanel />
            <Splitter />
            <DocumentView />
            <CommentsPanel />
            <TextToolbar />
          </div>
        </div>
      </div>
    </div>
  );
}
